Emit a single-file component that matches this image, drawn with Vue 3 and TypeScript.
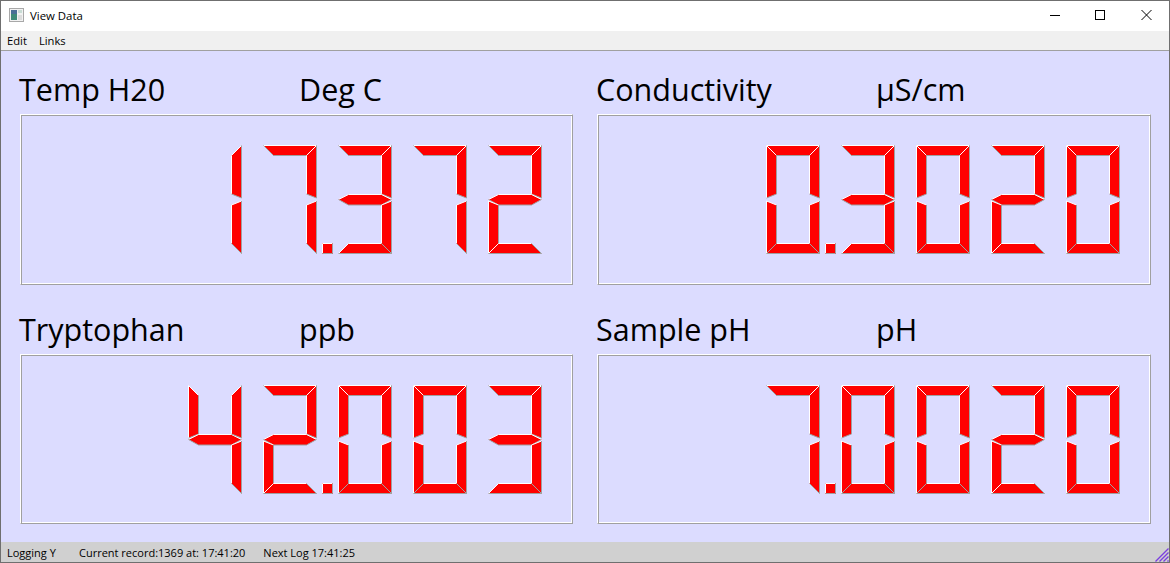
<script setup lang="ts">
interface Panel { name: string; unit: string; value: string }

const panels: Panel[] = [
  { name: 'Temp H20', unit: 'Deg C', value: '17.372' },
  { name: 'Conductivity', unit: 'µS/cm', value: '0.3020' },
  { name: 'Tryptophan', unit: 'ppb', value: '42.003' },
  { name: 'Sample pH', unit: 'pH', value: '7.0020' },
]

type Seg = 'a' | 'b' | 'c' | 'd' | 'e' | 'f' | 'g'

const glyphs: Record<string, Seg[]> = {
  '0': ['a', 'b', 'c', 'd', 'e', 'f'],
  '1': ['b', 'c'],
  '2': ['a', 'b', 'g', 'e', 'd'],
  '3': ['a', 'b', 'g', 'c', 'd'],
  '4': ['f', 'g', 'b', 'c'],
  '7': ['a', 'b', 'c'],
}

// Each outline is split in lit (top/left) and shaded (bottom/right) edges.
const shapes: Record<Seg, { fill: string; light: string; dark: string }> = {
  a: { fill: '0.5,0.5 53.5,0.5 43.5,10.5 10.5,10.5', light: 'M0.5 0.5H53.5', dark: 'M53.5 0.5L43.5 10.5H10.5L0.5 0.5' },
  b: { fill: '53.5,0.5 53.5,53 43.5,49 43.5,10.5', light: 'M43.5 49V10.5L53.5 0.5', dark: 'M53.5 0.5V53L43.5 49' },
  c: { fill: '53.5,56 53.5,108.5 43.5,98.5 43.5,60', light: 'M43.5 98.5V60L53.5 56', dark: 'M53.5 56V108.5L43.5 98.5' },
  d: { fill: '0.5,108.5 10.5,98.5 43.5,98.5 53.5,108.5', light: 'M0.5 108.5L10.5 98.5H43.5', dark: 'M43.5 98.5L53.5 108.5H0.5' },
  e: { fill: '0.5,56 10.5,60 10.5,98.5 0.5,108.5', light: 'M0.5 108.5V56L10.5 60', dark: 'M10.5 60V98.5L0.5 108.5' },
  f: { fill: '0.5,0.5 10.5,10.5 10.5,49 0.5,53', light: 'M0.5 53V0.5L10.5 10.5', dark: 'M10.5 10.5V49L0.5 53' },
  g: { fill: '0.5,54.5 10.5,49.5 43.5,49.5 53.5,54.5 43.5,60 10.5,60', light: 'M0.5 54.5L10.5 49.5H43.5L53.5 54.5', dark: 'M53.5 54.5L43.5 60H10.5L0.5 54.5' },
}

interface Cell { segs: Seg[]; dot: boolean }

function cells(value: string): Cell[] {
  const out: Cell[] = []
  for (const ch of value) {
    if (ch === '.') out[out.length - 1].dot = true
    else out.push({ segs: glyphs[ch] ?? [], dot: false })
  }
  return out
}
</script>

<template>
  <div class="window">
    <header class="titlebar">
      <svg class="appicon" width="15" height="14" viewBox="0 0 15 14">
        <rect x="0.5" y="0.5" width="14" height="13" fill="#f2f2f2" stroke="#a8a8a8" />
        <rect x="2" y="2" width="6" height="10" fill="#3f8a78" />
        <rect x="2" y="2" width="6" height="4" fill="#4a6f96" />
        <rect x="9" y="2" width="4" height="3" fill="#c8dcd4" />
        <rect x="9" y="7" width="4" height="5" fill="#dcdcdc" />
      </svg>
      <span class="title">View Data</span>
      <div class="controls">
        <svg class="ctl" width="46" height="30" viewBox="0 0 46 30"><path d="M19 14.5H29" stroke="#000" fill="none" /></svg>
        <svg class="ctl" width="46" height="30" viewBox="0 0 46 30"><rect x="18.5" y="9.5" width="9" height="9" stroke="#000" fill="none" /></svg>
        <svg class="ctl" width="46" height="30" viewBox="0 0 46 30"><path d="M18.5 9L28.5 19M28.5 9L18.5 19" stroke="#000" fill="none" /></svg>
      </div>
    </header>
    <nav class="menubar">
      <span>Edit</span>
      <span>Links</span>
    </nav>
    <main class="content">
      <section v-for="p in panels" :key="p.name" class="panel">
        <div class="heading">
          <span class="name">{{ p.name }}</span>
          <span class="unit">{{ p.unit }}</span>
        </div>
        <div class="lcd">
          <svg
            v-for="(c, i) in cells(p.value)"
            :key="i"
            class="digit"
            width="75"
            height="109"
            viewBox="0 0 75 109"
          >
            <g v-for="s in c.segs" :key="s">
              <polygon :points="shapes[s].fill" fill="#ff0000" />
              <path :d="shapes[s].light" class="light" />
              <path :d="shapes[s].dark" class="dark" />
            </g>
            <g v-if="c.dot">
              <rect x="59" y="98" width="11" height="11" fill="#ff0000" />
              <path d="M59.5 108.5V98.5H69.5" class="light" />
              <path d="M69.5 98.5V108.5H59.5" class="dark" />
            </g>
          </svg>
        </div>
      </section>
    </main>
    <footer class="statusbar">
      <span class="logging">Logging Y</span>
      <span>Current record:1369 at: 17:41:20</span>
      <span>Next Log 17:41:25</span>
      <svg class="grip" width="14" height="14" viewBox="0 0 14 14">
        <path d="M13.5 0.5L0.5 13.5M13.5 4.5L4.5 13.5M13.5 8.5L8.5 13.5M13.5 12.5L12.5 13.5" stroke="#7b3fe0" stroke-width="1.4" fill="none" />
      </svg>
    </footer>
  </div>
</template>

<style>
html, body { margin: 0; padding: 0; background: #fff; }
</style>

<style scoped>
.window {
  width: 1170px;
  height: 563px;
  box-sizing: border-box;
  border: 1px solid #6f6f6f;
  display: flex;
  flex-direction: column;
  font-family: "Open Sans", "Noto Sans", sans-serif;
  color: #000;
  overflow: hidden;
  position: relative;
}
.titlebar {
  height: 30px;
  flex: none;
  background: #fff;
  display: flex;
  align-items: flex-start;
  padding-left: 8px;
}
.appicon { margin: 7px 6px 0 0; }
.title { font-size: 11.4px; line-height: 16px; margin-top: 7px; }
.controls { margin-left: auto; display: flex; }
.ctl { display: block; }
.menubar {
  height: 19px;
  flex: none;
  background: #f0f0f0;
  border-bottom: 1px solid #a0a0a0;
  display: flex;
  align-items: center;
  gap: 12px;
  padding-left: 6px;
  font-size: 11.2px;
}
.content {
  flex: 1;
  background: #dcdcff;
  display: grid;
  grid-template-columns: 553px 554px;
  grid-template-rows: 218px 217px;
  column-gap: 24px;
  row-gap: 22px;
  padding: 16px 0 0 19px;
  align-content: start;
}
.panel { display: flex; flex-direction: column; }
.heading {
  height: 47px;
  flex: none;
  box-sizing: border-box;
  padding-bottom: 4px;
  display: flex;
  align-items: center;
  font-size: 30.5px;
  margin-left: -1px;
}
.name { width: 280px; }
.lcd {
  flex: 1;
  box-sizing: border-box;
  border: 1px solid;
  border-color: #ffffff #a0a0a0 #a0a0a0 #ffffff;
  box-shadow: inset 1px 1px 0 #a0a0a0, inset -1px -1px 0 #ffffff;
  display: flex;
  justify-content: flex-end;
  align-items: flex-start;
  padding: 30px 9px 0 0;
}
.digit { display: block; flex: none; }
.light { stroke: #ffffff; fill: none; }
.dark { stroke: #a0a0a0; fill: none; }
.statusbar {
  height: 20px;
  flex: none;
  background: #d0d0d0;
  display: flex;
  align-items: center;
  gap: 18px;
  padding-left: 6px;
  font-size: 11px;
  position: relative;
}
.logging { width: 54px; white-space: nowrap; }
.grip { position: absolute; right: 0; bottom: 0; }
</style>
